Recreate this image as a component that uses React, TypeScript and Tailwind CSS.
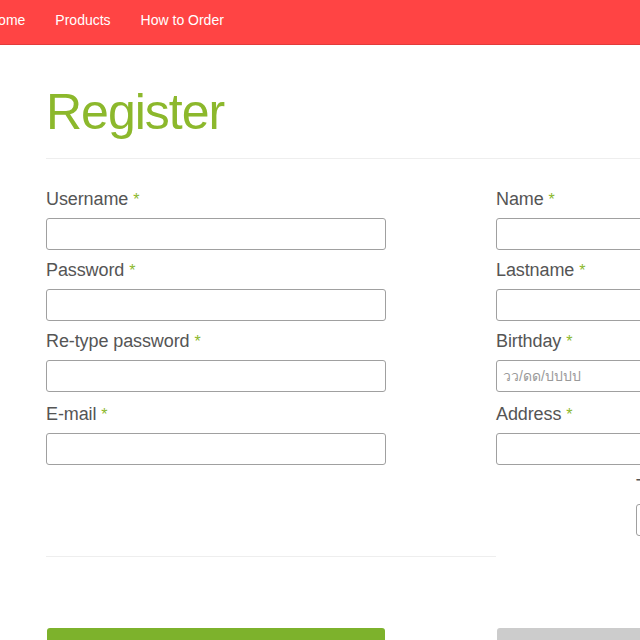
const font = { fontFamily: '"Liberation Sans", Arial, sans-serif' };

function Field({ label, placeholder, className = "" }: { label: string; placeholder?: string; className?: string }) {
  return (
    <div className={className}>
      <label className="mb-[6px] block pt-px text-[18px] leading-[25px] tracking-[-0.1px] text-[#555555]">
        {label} <span className="text-[16px] text-[#8cb82c]">*</span>
      </label>
      <input
        type="text"
        placeholder={placeholder}
        className="block h-8 w-[340px] rounded-[3px] border border-[#a0a0a0] bg-white px-[6px] text-[14px] text-[#555] outline-none placeholder:text-[#9a9a9a]"
        style={font}
      />
    </div>
  );
}

export default function App() {
  return (
    <div className="h-[640px] w-[640px] overflow-hidden bg-white" style={font}>
      <div className="w-[1000px]">
        {/* top nav */}
        <nav className="flex h-[45px] border-b border-[#e23b3b] bg-[#ff4444] text-[14px] leading-5 text-white">
          <a className="-ml-[12px] py-[10px] pr-[15px]">Home</a>
          <a className="px-[15px] py-[10px]">Products</a>
          <a className="px-[15px] py-[10px]">How to Order</a>
        </nav>

        <div className="pl-[46px]">
          <h1 className="mt-[40px] text-[50px] leading-[55px] tracking-[-1px] text-[#8cb82c]">Register</h1>
          <hr className="mt-[18px] w-[954px] border-t border-[#eeeeee]" />

          <div className="mt-[27px] flex">
            <div className="w-[450px]">
              <Field label="Username" />
              <Field label="Password" className="mt-[7px]" />
              <Field label="Re-type password" className="mt-[7px]" />
              <Field label="E-mail" className="mt-[9px]" />
            </div>
            <div className="w-[450px]">
              <Field label="Name" />
              <Field label="Lastname" className="mt-[7px]" />
              <Field label="Birthday" placeholder="วว/ดด/ปปปป" className="mt-[7px]" />
              <Field label="Address" className="mt-[9px]" />
              <div className="mt-[9px] pl-[140px]">
                <label className="mb-[5px] block text-[18px] leading-[25px] text-[#555555]">
                  Tel <span className="text-[16px] text-[#8cb82c]">*</span>
                </label>
                <input type="text" className="block h-8 w-[200px] rounded-[3px] border border-[#a0a0a0] bg-white" />
              </div>
            </div>
          </div>

          <div className="mt-[20px] flex">
            <div className="w-[450px]">
              <hr className="border-t border-[#eeeeee]" />
              <button className="ml-px mt-[71px] h-10 w-[338px] rounded-[3px] bg-[#7db22c] text-white">Register</button>
            </div>
            <div className="w-[450px]">
              <button className="ml-px mt-[72px] h-10 w-[338px] rounded-[3px] bg-[#cccccc] text-[#333]">Cancel</button>
            </div>
          </div>
        </div>
      </div>
    </div>
  );
}
